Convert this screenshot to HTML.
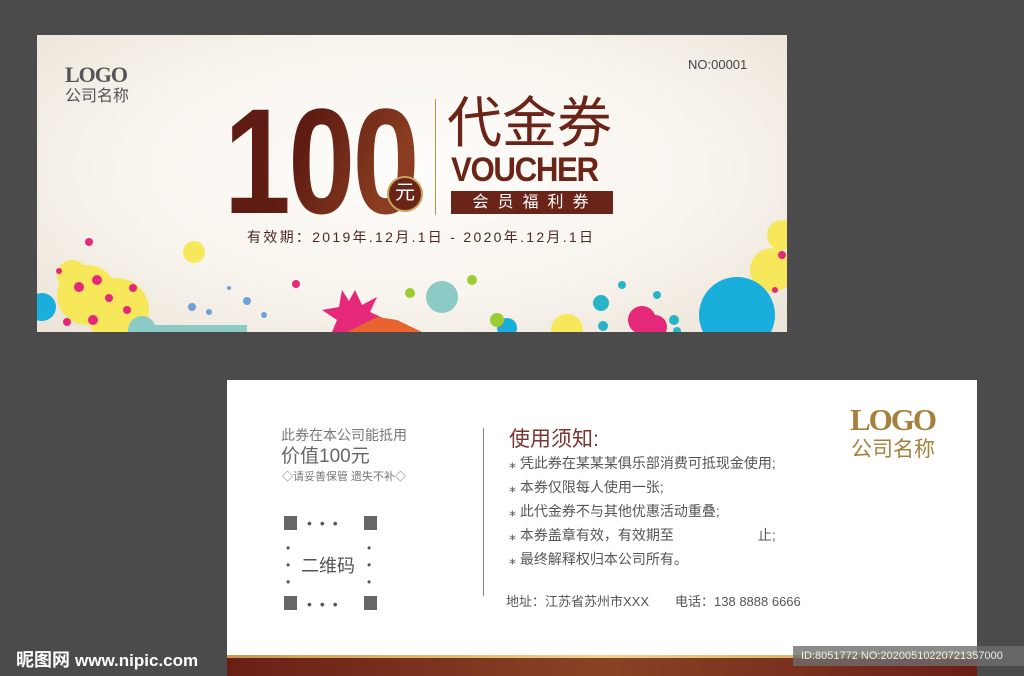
<!DOCTYPE html>
<html><head><meta charset="utf-8"><style>
*{margin:0;padding:0;box-sizing:border-box}
body{width:1024px;height:676px;background:#4b4b4b;position:relative;overflow:hidden;font-family:"Liberation Sans","Noto Sans CJK SC",sans-serif}
.a{position:absolute;white-space:nowrap}
#top{position:absolute;left:37px;top:35px;width:750px;height:297px;background:radial-gradient(ellipse at 50% 45%,#fefdfb 0%,#f8f4ee 55%,#ebe3d6 100%);overflow:hidden}
#bot{position:absolute;left:227px;top:380px;width:750px;height:296px;background:#fff;overflow:hidden}
</style></head><body>
<div id="top">
 <div class="a" style="left:28px;top:27px;font:bold 22px 'Liberation Serif',serif;color:#555;letter-spacing:-1px">LOGO</div>
 <div class="a" style="left:28px;top:47px;font-size:16px;color:#555">公司名称</div>
 <div class="a" style="left:651px;top:22px;font-size:13px;color:#444">NO:00001</div>
 <div class="a" style="left:187px;top:51px;font:bold 150px/150px 'Liberation Sans',sans-serif;color:#6b2216;letter-spacing:-3px;transform:scaleX(0.8);transform-origin:left top;background:linear-gradient(120deg,#5e1c12 40%,#8a3d20 80%);-webkit-background-clip:text;background-clip:text;-webkit-text-fill-color:transparent">100</div>
 <div class="a" style="left:350px;top:141px;width:36px;height:36px;border-radius:50%;background:#6b2418;border:2px solid #c9a55a;color:#fff;font-size:20px;text-align:center;line-height:31px">元</div>
 <div class="a" style="left:398px;top:64px;width:1px;height:116px;background:#b98f4e"></div>
 <div class="a" style="left:410px;top:56px;font-size:55px;color:#6b2418;line-height:64px">代金券</div>
 <div class="a" style="left:414px;top:116px;font:bold 34px 'Liberation Sans',sans-serif;color:#6b2418;letter-spacing:-1.5px;transform:scaleX(0.92);transform-origin:left top">VOUCHER</div>
 <div class="a" style="left:414px;top:156px;width:162px;height:23px;background:#6b2418;color:#fff;font-size:16px;line-height:23px;text-align:center;letter-spacing:9px;padding-left:6px">会员福利券</div>
 <div class="a" style="left:210px;top:192px;font-size:14px;color:#4a2a20;letter-spacing:2.3px">有效期：2019年.12月.1日 - 2020年.12月.1日</div>
 <svg class="a" style="left:0;top:0" width="750" height="297">
  <g fill="#f6e85a"><circle cx="50" cy="260" r="30"/><circle cx="80" cy="275" r="32"/><circle cx="35" cy="240" r="15"/><circle cx="157" cy="217" r="11"/><circle cx="735" cy="235" r="22"/><circle cx="745" cy="200" r="15"/><circle cx="530" cy="295" r="16"/></g>
  <g fill="#1aaedc"><circle cx="700" cy="280" r="38"/><circle cx="5" cy="272" r="14"/><circle cx="470" cy="293" r="10"/></g>
  <g fill="#8ccac5"><circle cx="405" cy="262" r="16"/><circle cx="105" cy="295" r="14"/><rect x="100" y="290" width="110" height="7"/></g>
  <g fill="#e6287a"><polygon points="318,255 325,270 340,262 333,277 350,285 330,292 335,297 295,297 300,285 285,275 302,272 305,255 312,266"/><circle cx="605" cy="285" r="14"/><circle cx="618" cy="292" r="12"/><circle cx="56" cy="285" r="5"/><circle cx="72" cy="263" r="4"/><circle cx="90" cy="275" r="4"/><circle cx="42" cy="252" r="5"/><circle cx="60" cy="245" r="5"/><circle cx="96" cy="253" r="4"/><circle cx="52" cy="207" r="4"/><circle cx="259" cy="249" r="4"/><circle cx="745" cy="220" r="4"/><circle cx="738" cy="255" r="3"/><circle cx="462" cy="288" r="4"/><circle cx="30" cy="287" r="4"/><circle cx="22" cy="236" r="3"/></g>
  <g fill="#e8632e"><polygon points="310,297 385,297 360,285 340,282"/></g>
  <g fill="#9acd32"><circle cx="373" cy="258" r="5"/><circle cx="435" cy="245" r="5"/><circle cx="460" cy="285" r="7"/></g>
  <g fill="#28b3c7"><circle cx="564" cy="268" r="8"/><circle cx="585" cy="250" r="4"/><circle cx="620" cy="260" r="4"/><circle cx="637" cy="285" r="5"/><circle cx="566" cy="291" r="5"/><circle cx="640" cy="296" r="4"/></g>
  <g fill="#6fa0d8"><circle cx="155" cy="272" r="4"/><circle cx="172" cy="277" r="3"/><circle cx="210" cy="266" r="4"/><circle cx="192" cy="253" r="2"/><circle cx="227" cy="280" r="3"/></g>
 </svg>
</div>
<div id="bot">
 <div class="a" style="left:54px;top:45px;font-size:14px;color:#777">此券在本公司能抵用</div>
 <div class="a" style="left:54px;top:61px;font-size:19px;color:#666">价值100元</div>
 <div class="a" style="left:55px;top:88px;font-size:11px;color:#777">◇请妥善保管 遗失不补◇</div>
 <div class="a" style="left:57px;top:136px;width:13px;height:14px;background:#666"></div>
 <div class="a" style="left:137px;top:136px;width:13px;height:14px;background:#666"></div>
 <div class="a" style="left:57px;top:216px;width:13px;height:14px;background:#666"></div>
 <div class="a" style="left:137px;top:216px;width:13px;height:14px;background:#666"></div>
 <div class="a" style="left:80px;top:135px;font-size:14px;color:#555;letter-spacing:8px">•••</div>
 <div class="a" style="left:80px;top:216px;font-size:14px;color:#555;letter-spacing:8px">•••</div>
 <div class="a" style="left:59px;top:160px;font-size:12px;color:#555;line-height:17px">•<br>•<br>•</div>
 <div class="a" style="left:140px;top:160px;font-size:12px;color:#555;line-height:17px">•<br>•<br>•</div>
 <div class="a" style="left:74px;top:172px;font-size:18px;color:#555">二维码</div>
 <div class="a" style="left:256px;top:48px;width:1px;height:168px;background:#9a7a6a"></div>
 <div class="a" style="left:282px;top:43px;font-size:21px;color:#7a3530">使用须知:</div>
 <div class="a" style="left:282px;top:71px;font-size:14px;color:#555;line-height:24px">⁎ 凭此券在某某某俱乐部消费可抵现金使用;<br>⁎ 本券仅限每人使用一张;<br>⁎ 此代金券不与其他优惠活动重叠;<br>⁎ 本券盖章有效，有效期至　　　　　　止;<br>⁎ 最终解释权归本公司所有。</div>
 <div class="a" style="left:279px;top:211px;font-size:13px;color:#555">地址：江苏省苏州市XXX　　电话：138 8888 6666</div>
 <div class="a" style="left:623px;top:22px;font:bold 31px 'Liberation Serif',serif;color:#a8803e;letter-spacing:-2px">LOGO</div>
 <div class="a" style="left:624px;top:53px;font-size:21px;color:#a8803e">公司名称</div>
 <div class="a" style="left:0;top:275px;width:750px;height:3px;background:linear-gradient(90deg,#c99a50,#f0d28a,#c99a50)"></div>
 <div class="a" style="left:0;top:278px;width:750px;height:18px;background:linear-gradient(90deg,#6a1f16,#8a4325 50%,#6a1f16)"></div>
</div>
<div class="a" style="left:793px;top:646px;width:231px;height:20px;background:rgba(110,110,110,0.8);color:#eee;font-size:11px;line-height:20px;padding-left:8px">ID:8051772 NO:20200510220721357000</div>
<div class="a" style="left:16px;top:646px;color:#fff;font-size:18px;font-weight:bold">昵图网 <span style="font-size:17px">www.nipic.com</span></div>
</body></html>
